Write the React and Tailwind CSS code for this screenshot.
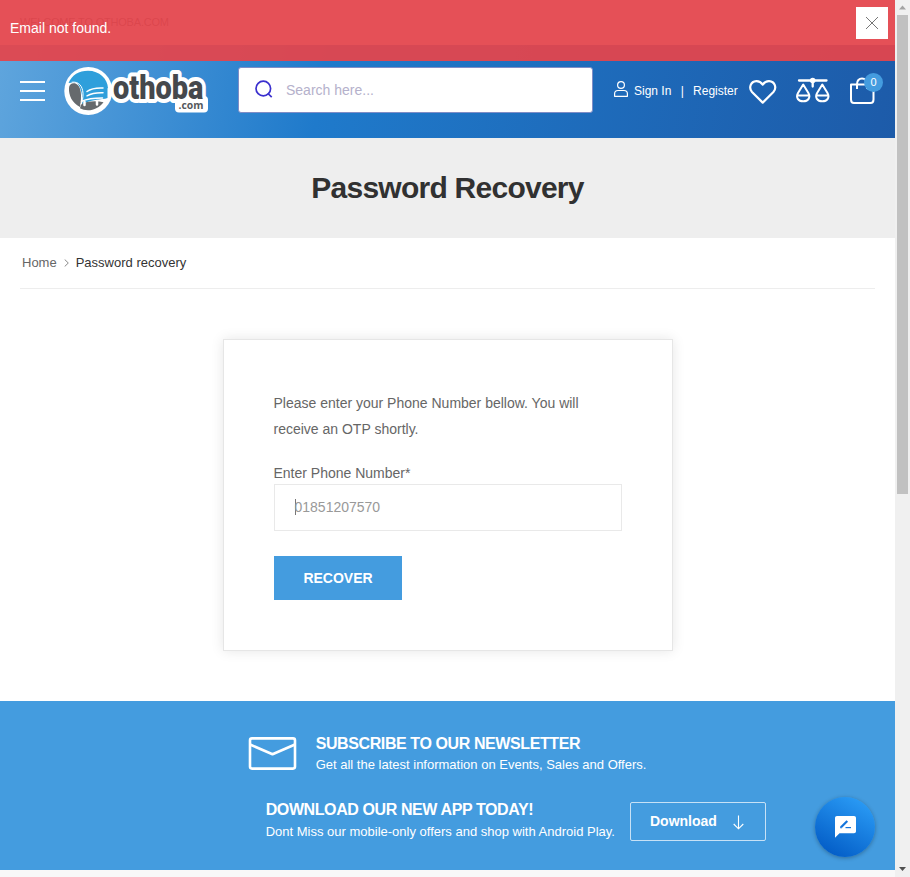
import React from "react";

function Logo() {
  return (
    <svg className="h-12 w-36 shrink-0" viewBox="0 0 144 48">
      <rect x="111" y="29" width="33" height="16.500" rx="4" fill="#fff" />
      <path d="M47 20h90v9H47Z" fill="#fff" />
      <circle cx="24.300" cy="24" r="24" fill="#fff" />
      <path d="M4.500 16C8 8 15 3.800 24 3.800c11.500 0 19.500 8 20 17.500-8-2.500-17-.6-22 3.500-1-6-6.500-11-17.500-8.800Z" fill="#2f9fdb" />
      <path d="M12 14.500 27 9l16.500 12v10C38 33 25 32 18 38c1-8 0-17-6-23.500Z" fill="#2f9fdb" />
      <path d="M5 21c0-4 3.500-5.500 6.500-4.500C17.500 18.500 18 29 16 40 8 36 4.500 28 5 21Z" fill="#666a6d" />
      <path d="M17 37.500c5-3 14-4 22.500-2.300C36 40 30 43.300 24 43.300c-3 0-6-.8-8-2Z" fill="#666a6d" />
      <g fill="none" stroke="#fff" strokeLinecap="round" strokeWidth="1.500">
        <path d="M8 15.200c7-1 10.500 4 11 11 .1 5-.6 8-2 11" strokeWidth="1" />
        <path d="M23 24.500c4-3 9-3.800 16-3.500M23 28.800c4-2.200 10-3.200 16-3M17.500 34.300c7-3 14-3.300 21-3.300" />
        <path d="M20.500 35v3M33 34v3.500" strokeWidth="2.500" />
      </g>
      <text x="49" y="31.500" fontSize="32.500" textLength="90.500" lengthAdjust="spacingAndGlyphs" fontFamily="Roboto, sans-serif" fontWeight="900" fill="#45484c" stroke="#fff" strokeWidth="8" strokeLinejoin="round" paintOrder="stroke">othoba</text>
      <text x="114.500" y="41.700" fontSize="11" textLength="25" lengthAdjust="spacingAndGlyphs" fontFamily="'Open Sans', sans-serif" fontWeight="700" fill="#55585c">.com</text>
    </svg>
  );
}

function ScalesIcon() {
  return (
    <svg className="ml-5 h-7 w-[34px] shrink-0" viewBox="0 0 34 28" fill="none" stroke="#fff" strokeWidth="2" strokeLinejoin="round" strokeLinecap="round">
      <path d="M3 3.500h27.500M16.700 3.500v6" strokeWidth="2.300" />
      <circle cx="16.700" cy="3.500" r="1.800" fill="#fff" />
      <path d="M7.200 7.500 2 16C-.5 20.500 2.200 24.300 7.200 24.300s7.700-3.800 5.200-8.300ZM1.200 18.500h12" />
      <path d="M26.300 7.500 21.100 16c-2.500 4.500.2 8.300 5.200 8.300s7.700-3.800 5.200-8.300ZM20.300 18.500h12" />
    </svg>
  );
}

function Header() {
  return (
    <header className="flex h-[93px] items-center bg-[linear-gradient(100deg,#5fa5dd_0%,#1f7acb_36%,#1d5ba9_100%)] pb-[2px] pl-5 text-white">
      <div className="flex w-[25px] shrink-0 flex-col gap-[7px]">
        <span className="h-[2px] bg-white" />
        <span className="h-[2px] bg-white" />
        <span className="h-[2px] bg-white" />
      </div>
      <div className="ml-[19px] flex"><Logo /></div>
      <div className="-mt-px ml-[30px] flex h-[46px] w-[355px] shrink-0 items-center rounded-[3px] border border-[#7f8dc6] bg-white pl-4">
        <svg className="mt-[-2px] h-[19px] w-[19px]" viewBox="0 0 19 19" fill="none" stroke="#3a2fce" strokeWidth="1.700">
          <circle cx="8.300" cy="8.500" r="7.300" />
          <path d="m13 13.500 3.700 3.700" />
        </svg>
        <span className="ml-3 text-sm text-[#b5b1cb]">Search here...</span>
      </div>
      <svg className="-mt-[3px] ml-[21px] h-4 w-[14px] shrink-0" viewBox="0 0 14 16" fill="none" stroke="#fff" strokeWidth="1.200" strokeLinejoin="round">
        <circle cx="7" cy="4" r="3.400" />
        <path d="M.6 15.300v-2.500C.6 10.700 2 9.500 4 9.500h6c2 0 3.400 1.200 3.400 3.300v2.500Z" />
      </svg>
      <div className="ml-[6px] flex w-[104px] shrink-0 text-xs whitespace-nowrap">
        <span className="shrink-0">Sign In</span>
        <span className="ml-[9.300px]">|</span>
        <span className="ml-[9.300px]">Register</span>
      </div>
      <svg className="mt-[3px] ml-[11px] h-6 w-7 shrink-0" viewBox="0 0 28 24" fill="none" stroke="#fff" strokeWidth="2.200" strokeLinejoin="round">
        <path d="M13.700 22.600 3 12C-.5 8 1.500 1.500 7.300 1.200c2.700-.1 4.800 1.200 6.400 3.500 1.600-2.300 3.700-3.600 6.400-3.500C26 1.500 28 8 24.400 12Z" />
      </svg>
      <div className="-ml-px flex"><ScalesIcon /></div>
      <div className="relative ml-5 flex shrink-0">
        <svg className="h-7 w-[26px]" viewBox="0 0 26 28" fill="none" stroke="#fff" strokeWidth="2" strokeLinejoin="round">
          <path d="M1 7.500h22.500v15c0 2-.8 3.500-3 3.500H4c-2.200 0-3-1.500-3-3.500ZM7 12V7c0-3.300 2-5.500 5-5.500s5 2.200 5 5.500v5" />
        </svg>
        <span className="absolute -top-[4px] left-[14px] flex h-[19px] w-[19px] items-center justify-center rounded-full bg-[#449cdf] text-[11px] leading-none">0</span>
      </div>
    </header>
  );
}

function RecoveryForm() {
  return (
    <section className="ml-[223px] mt-[50px] w-[450px] border border-[#e6e6e6] bg-white p-[50px] text-sm text-[#666] shadow-[0_0_12px_rgba(0,0,0,0.1)]">
      <p className="-ml-[0.500px] leading-[26px]">Please enter your Phone Number bellow. You will<br />receive an OTP shortly.</p>
      <div className="mt-5 -ml-[0.500px] h-[22px] leading-[22px]">Enter Phone Number*</div>
      <div className="flex h-[47px] items-center border border-[#e9e9e9] pb-[2px] pl-5 text-[#999]">
        <span className="-mr-[1.500px] h-4 w-px bg-[#777]" />
        <span>01851207570</span>
      </div>
      <button className="mt-[25px] block h-11 w-32 bg-[#449cdf] text-sm font-bold text-white">RECOVER</button>
    </section>
  );
}

function Footer() {
  return (
    <footer className="mt-[50px] h-[169px] bg-[#449cdf] pt-8 text-white">
      <div className="ml-[248px] flex">
        <svg className="mt-1 h-[33px] w-[49px]" viewBox="0 0 49 33" fill="none" stroke="#fff" strokeWidth="2.600" strokeLinejoin="round">
          <rect x="2" y="1.400" width="45" height="30.200" rx="2" />
          <path d="m2 7.500 22.500 9.700L47 7.500" />
        </svg>
        <div className="ml-[18.700px]">
          <h4 className="text-base leading-[21px] font-bold tracking-[-0.4px]">SUBSCRIBE TO OUR NEWSLETTER</h4>
          <p className="text-[13px] leading-[21px]">Get all the latest information on Events, Sales and Offers.</p>
        </div>
      </div>
      <div className="mt-6 ml-[265.700px] flex">
        <div className="w-[364.300px]">
          <h4 className="text-base leading-[21px] font-bold tracking-[-0.4px]">DOWNLOAD OUR NEW APP TODAY!</h4>
          <p className="mt-px text-[13px] leading-[21px]">Dont Miss our mobile-only offers and shop with Android Play.</p>
        </div>
        <div className="mt-[3px] flex h-[39px] w-[136px] items-center rounded-[2px] border border-white/70 pl-[19px] text-sm font-bold">
          <span className="-mt-[2px]">Download</span>
          <svg className="mt-[2px] ml-4 h-[15px] w-[11px]" viewBox="0 0 11 15" fill="none" stroke="#fff" strokeWidth="1.100">
            <path d="M5.500.5v13M.7 9l4.800 4.800L10.300 9" />
          </svg>
        </div>
      </div>
    </footer>
  );
}

function Scrollbar() {
  return (
    <div className="flex w-[15px] shrink-0 flex-col items-center bg-[#f0f0f0]">
      <svg className="h-[15px] w-[15px]" viewBox="0 0 15 15"><path d="M7.500 5.500 11 9.500H4Z" fill="#a3a3a3" /></svg>
      <div className="h-[479px] w-[11px] bg-[#c1c1c1]" />
      <svg className="mt-auto h-[15px] w-[15px]" viewBox="0 0 15 15"><path d="M4 5h7L7.500 9Z" fill="#505050" /></svg>
    </div>
  );
}

export default function App() {
  return (
    <div className="relative flex h-[877px] w-[910px] overflow-hidden bg-white font-['Liberation_Sans',Arial,sans-serif]">
      <main className="flex w-[895px] shrink-0 flex-col">
        <div className="flex h-[45px] items-center bg-white pl-5 text-[11px] tracking-[-0.200px] text-[#555]">WELCOME TO OTHOBA.COM</div>
        <Header />
        <div className="flex h-[100px] items-center justify-center bg-[#eee] pb-[2px]">
          <h1 className="text-[30px] font-bold tracking-[-0.75px] text-[#313131]">Password Recovery</h1>
        </div>
        <nav className="mx-5 flex h-[51px] items-center border-b border-[#ededed] pl-[2px] text-[13px] text-[#666]">
          <span>Home</span>
          <svg className="mx-[7px] h-2 w-[5px]" viewBox="0 0 5 8" fill="none" stroke="#888"><path d="m.7.5 3.600 3.500L.7 7.500" /></svg>
          <span className="text-[#333]">Password recovery</span>
        </nav>
        <RecoveryForm />
        <Footer />
        <div className="h-[7px] bg-[#f8f8f8]" />
      </main>
      <Scrollbar />
      <div className="absolute top-0 left-0 flex h-[61px] w-[895px] justify-between bg-[#e3454c]/94 pl-[10px] text-sm text-white">
        <span className="mt-[18px]">Email not found.</span>
        <button className="mt-[7px] mr-[7px] flex h-8 w-8 items-center justify-center bg-white">
          <svg className="h-3 w-3" viewBox="0 0 12 12" stroke="#666" strokeWidth="0.900"><path d="m0 0 12 12M12 0 0 12" /></svg>
        </button>
      </div>
      <div className="absolute top-[797px] left-[815px] flex h-[60px] w-[60px] items-center justify-center rounded-full bg-[linear-gradient(210deg,#2a9bf5_10%,#0560c9_85%)] shadow-[0_1px_4px_rgba(0,0,0,0.3)]">
        <svg className="ml-px h-[22px] w-[21px]" viewBox="0 0 21 22">
          <path d="M2 0h17c1.200 0 2 .8 2 2v13.200c0 1.200-.8 2-2 2H4.500L0 21.800V2C0 .8.800 0 2 0Z" fill="#fff" />
          <path d="M6 11.300 12.300 5" stroke="#1374dc" strokeWidth="2.200" />
          <path d="M5.200 12.200v-2l2 2Z" fill="#1374dc" />
          <path d="M10.500 11.600H16" stroke="#1374dc" strokeWidth="1.200" />
        </svg>
      </div>
    </div>
  );
}
